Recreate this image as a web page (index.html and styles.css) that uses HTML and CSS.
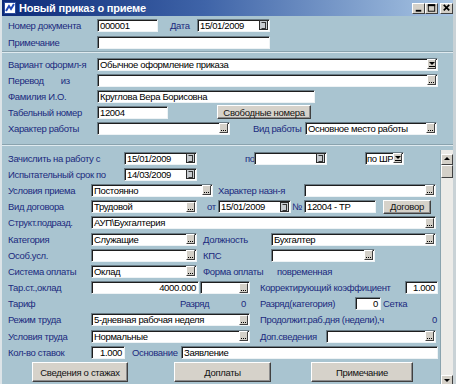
FILE: index.html
```html
<!DOCTYPE html>
<html lang="ru">
<head>
  <meta charset="UTF-8">
  <title>Новый приказ о приеме</title>
  <link rel="stylesheet" href="styles.css">
</head>
<body>
  <div class="window">
    <div class="titlebar">
      <svg class="app-icon" width="12" height="12" viewBox="0 0 12 12">
        <rect x="0.5" y="0.5" width="11" height="11" fill="#fff" stroke="#2a4c9c"/>
        <path d="M2 9 L5 4 L7 7 L10 2" stroke="#1f48b8" stroke-width="2" fill="none"/>
      </svg>
      <span class="title">Новый приказ о приеме</span>
      <div class="caption-btns">
        <span class="cbtn">
          <svg width="12" height="10" viewBox="0 0 12 10"><rect x="3" y="7" width="6" height="2" fill="#000"/></svg>
        </span>
        <span class="cbtn">
          <svg width="12" height="10" viewBox="0 0 12 10"><rect x="2.5" y="1.5" width="7" height="7" fill="none" stroke="#000"/><rect x="2" y="1" width="8" height="2" fill="#000"/></svg>
        </span>
        <span class="cbtn cbtn-close">
          <svg width="12" height="10" viewBox="0 0 12 10"><path d="M3 1.5 L9 7.5 M9 1.5 L3 7.5" stroke="#000" stroke-width="1.8"/></svg>
        </span>
      </div>
    </div>

    <div class="form">
      <div class="sec sec-top">
        <div class="row">
          <span class="lbl lbl-main">Номер документа</span>
          <div class="field w61"><span class="val">000001</span></div>
          <span class="lbl lbl-date">Дата</span>
          <div class="field w73"><span class="val">15/01/2009</span><i class="cal"></i></div>
        </div>
        <div class="row">
          <span class="lbl lbl-main">Примечание</span>
          <div class="field w173"></div>
        </div>
      </div>

      <div class="sep sep-1"></div>

      <div class="sec sec-mid">
        <div class="row">
          <span class="lbl lbl-main">Вариант оформл-я</span>
          <div class="field w341"><span class="val">Обычное оформление приказа</span><i class="drop"></i></div>
        </div>
        <div class="row">
          <span class="lbl lbl-main lbl-split"><span>Перевод</span><span class="iz">из</span></span>
          <div class="field w341"><span class="val"></span><i class="dots"></i></div>
        </div>
        <div class="row">
          <span class="lbl lbl-main">Фамилия И.О.</span>
          <div class="field w218"><span class="val">Круглова Вера Борисовна</span></div>
        </div>
        <div class="row">
          <span class="lbl lbl-main">Табельный номер</span>
          <div class="field w71"><span class="val">12004</span></div>
          <button class="btn btn-free">Свободные номера</button>
        </div>
        <div class="row">
          <span class="lbl lbl-main">Характер работы</span>
          <div class="field w133"><span class="val"></span><i class="dots"></i></div>
          <span class="lbl lbl-kind">Вид работы</span>
          <div class="field w132"><span class="val">Основное место работы</span><i class="dots"></i></div>
        </div>
      </div>

      <div class="sep sep-2"></div>

      <div class="sec-scroll">
        <div class="scroll-content">
          <div class="row row-s">
            <span class="lbl lbl-long">Зачислить на работу с</span>
            <div class="field w73"><span class="val">15/01/2009</span><i class="cal"></i></div>
            <span class="lbl lbl-po">по</span>
            <div class="field w73"><span class="val"></span><i class="cal"></i></div>
            <div class="field w39 gap-shr"><span class="val">по ШР</span><i class="drop"></i></div>
          </div>
          <div class="row row-s">
            <span class="lbl lbl-long">Испытательный срок по</span>
            <div class="field w73"><span class="val">14/03/2009</span><i class="cal"></i></div>
          </div>
          <div class="row row-s">
            <span class="lbl lbl-short">Условия приема</span>
            <div class="field w122"><span class="val">Постоянно</span><i class="dots"></i></div>
            <span class="lbl lbl-assign">Характер назн-я</span>
            <div class="field w132"><span class="val"></span><i class="dots"></i></div>
          </div>
          <div class="row row-s">
            <span class="lbl lbl-short">Вид договора</span>
            <div class="field w106"><span class="val">Трудовой</span><i class="dots"></i></div>
            <span class="lbl lbl-ot">от</span>
            <div class="field w73"><span class="val">15/01/2009</span><i class="cal"></i></div>
            <span class="lbl lbl-no">№</span>
            <div class="field w72"><span class="val">12004 - ТР</span></div>
            <button class="btn btn-contract">Договор</button>
          </div>
          <div class="row row-s">
            <span class="lbl lbl-short">Структ.подразд.</span>
            <div class="field w345"><span class="val">АУП\Бухгалтерия</span><i class="dots"></i></div>
          </div>
          <div class="row row-s">
            <span class="lbl lbl-short">Категория</span>
            <div class="field w106"><span class="val">Служащие</span><i class="dots"></i></div>
            <span class="lbl lbl-right">Должность</span>
            <div class="field w165"><span class="val">Бухгалтер</span><i class="dots"></i></div>
          </div>
          <div class="row row-s">
            <span class="lbl lbl-short">Особ.усл.</span>
            <div class="field w106"><span class="val"></span><i class="dots"></i></div>
            <span class="lbl lbl-right">КПС</span>
            <div class="field w104"><span class="val"></span><i class="dots"></i></div>
          </div>
          <div class="row row-s">
            <span class="lbl lbl-short">Система оплаты</span>
            <div class="field w106"><span class="val">Оклад</span><i class="dots"></i></div>
            <span class="lbl lbl-right lbl-form">Форма оплаты</span>
            <span class="lbl">повременная</span>
          </div>
          <div class="row row-s">
            <span class="lbl lbl-short">Тар.ст.,оклад</span>
            <div class="field w108 num"><span class="val">4000.000</span></div>
            <div class="field w50 gap-1"><span class="val"></span><i class="dots"></i></div>
            <span class="lbl lbl-coef">Корректирующий коэффициент</span>
            <div class="field w33 num"><span class="val">1.000</span></div>
          </div>
          <div class="row row-s">
            <span class="lbl lbl-tarif">Тариф</span>
            <span class="lbl lbl-grade">Разряд</span>
            <span class="lbl lbl-zero">0</span>
            <span class="lbl lbl-cat">Разряд(категория)</span>
            <div class="field w26 num"><span class="val">0</span></div>
            <span class="lbl lbl-grid">Сетка</span>
          </div>
          <div class="row row-s">
            <span class="lbl lbl-short">Режим труда</span>
            <div class="field w159"><span class="val">5-дневная рабочая неделя</span><i class="dots"></i></div>
            <span class="lbl lbl-dur">Продолжит.раб.дня (недели),ч</span>
            <span class="lbl">0</span>
          </div>
          <div class="row row-s">
            <span class="lbl lbl-short">Условия труда</span>
            <div class="field w159"><span class="val">Нормальные</span><i class="dots"></i></div>
            <span class="lbl lbl-extra">Доп.сведения</span>
            <div class="field w110"><span class="val"></span><i class="dots"></i></div>
          </div>
          <div class="row row-s">
            <span class="lbl lbl-short">Кол-во ставок</span>
            <div class="field w34 num"><span class="val">1.000</span></div>
            <span class="lbl lbl-basis">Основание</span>
            <div class="field w257"><span class="val">Заявление</span></div>
          </div>

          <div class="actions">
            <button class="btn btn-big btn-exp">Сведения о стажах</button>
            <button class="btn btn-big btn-extra">Доплаты</button>
            <button class="btn btn-big btn-note">Примечание</button>
          </div>
        </div>

        <div class="scrollbar">
          <span class="sb-btn sb-up"></span>
          <span class="sb-thumb"></span>
          <span class="sb-track"></span>
          <span class="sb-btn sb-down"></span>
        </div>
      </div>
    </div>
  </div>
</body>
</html>
```

FILE: styles.css
```css
* {
  margin: 0;
  padding: 0;
  box-sizing: border-box;
}

body {
  font-family: 'Liberation Sans', Arial, sans-serif;
  font-size: 9.5px;
  letter-spacing: -0.35px;
  background: #a9c4d0;
}

.window {
  width: 456px;
  height: 384px;
  overflow: hidden;
  background: #a9c4d0;
  border-left: 2px solid #dde4e8;
  border-right: 3px solid #c9d2d6;
}

/* title bar */
.titlebar {
  display: flex;
  align-items: center;
  height: 16px;
  padding-left: 2px;
  background: linear-gradient(to right, #0c2a78 0%, #3f64a8 45%, #a9c6e4 100%);
}

.app-icon {
  margin-right: 3px;
}

.title {
  color: #fff;
  font-weight: bold;
  font-size: 11px;
  letter-spacing: -0.2px;
}

.caption-btns {
  display: flex;
  margin-left: auto;
  margin-right: 0;
}

.cbtn {
  display: flex;
  align-items: center;
  justify-content: center;
  width: 13px;
  height: 11px;
  background: #d4d0c8;
  border: 1px solid;
  border-color: #fff #404040 #404040 #fff;
}

.cbtn-close {
  margin-left: 2px;
}

/* form */
.form {
  padding-top: 1px;
}

.sec {
  padding-left: 6px;
}

.row {
  display: flex;
  align-items: center;
  height: 16px;
  white-space: nowrap;
}

.sec-top .row + .row {
  margin-top: 1px;
}

.row-s {
  height: 16.2px;
}

.lbl {
  color: #1b2a7e;
  white-space: nowrap;
}

.lbl-main { width: 89px; }
.lbl-date { width: 27px; margin-left: 12px; }
.lbl-split { display: flex; }
.lbl-split .iz { margin-left: 17px; }
.lbl-kind { width: 52px; margin-left: 23px; }
.lbl-long { width: 116px; }
.lbl-po { width: 9px; margin-left: 48px; }
.lbl-short { width: 83px; }
.lbl-assign { width: 86px; margin-left: 5px; }
.lbl-ot { width: 11px; margin-left: 10px; }
.lbl-no { width: 13px; padding-left: 1px; }
.lbl-right { width: 68px; margin-left: 6px; }
.lbl-form { width: 74px; }
.lbl-coef { width: 145px; margin-left: 10px; }
.lbl-tarif { width: 172px; }
.lbl-grade { width: 61px; }
.lbl-zero { width: 9px; }
.lbl-cat { width: 95px; margin-left: 10px; }
.lbl-grid { margin-left: 2px; }
.lbl-dur { width: 172px; margin-left: 10px; }
.lbl-extra { width: 66px; margin-left: 10px; }
.lbl-basis { width: 49px; margin-left: 7px; }

/* input boxes */
.field {
  display: flex;
  align-items: center;
  height: 13px;
  background: #fff;
  border-top: 1px solid #6a7c86;
  border-left: 1px solid #6a7c86;
  border-right: 1px solid #eef3f5;
  border-bottom: 1px solid #eef3f5;
  box-shadow: inset 1px 1px 0 #1e1e1e;
  color: #000;
}

.val {
  flex: 1;
  padding-left: 2px;
  overflow: hidden;
  white-space: nowrap;
  line-height: 11px;
}

.num .val {
  text-align: right;
  padding-right: 2px;
}

.w26 { width: 26px; }
.w33 { width: 33px; }
.w34 { width: 34px; }
.w39 { width: 39px; }
.w50 { width: 50px; }
.w61 { width: 61px; }
.w71 { width: 71px; }
.w72 { width: 72px; }
.w73 { width: 73px; }
.w104 { width: 104px; }
.w106 { width: 106px; }
.w108 { width: 108px; }
.w110 { width: 110px; }
.w122 { width: 122px; }
.w132 { width: 132px; }
.w133 { width: 133px; }
.w159 { width: 159px; }
.w165 { width: 165px; }
.w173 { width: 173px; }
.w218 { width: 218px; }
.w257 { width: 257px; }
.w341 { width: 341px; }
.w345 { width: 345px; }

.gap-1 { margin-left: 1px; }
.gap-shr { margin-left: 38px; }

.gap-shr .val {
  padding-left: 1px;
}

/* small buttons inside fields */
.dots,
.drop,
.cal {
  position: relative;
  flex: none;
  width: 9px;
  height: 10px;
  margin-right: 1px;
  background: #d4d0c8;
  border: 1px solid;
  border-color: #fff #404040 #404040 #fff;
}

.dots::after {
  content: "";
  position: absolute;
  left: 1px;
  bottom: 1px;
  width: 1px;
  height: 1px;
  background: #000;
  box-shadow: 2px 0 #000, 4px 0 #000;
}

.drop::before {
  content: "";
  position: absolute;
  left: 1px;
  top: 2px;
  border-left: 3px solid transparent;
  border-right: 3px solid transparent;
  border-top: 3px solid #000;
}

.drop::after {
  content: "";
  position: absolute;
  left: 1px;
  top: 6px;
  width: 6px;
  height: 1px;
  background: #000;
}

.cal {
  background: #c8ccd0;
  border-color: #2b2b2b;
}

.cal::after {
  content: "";
  position: absolute;
  left: 1px;
  top: 1px;
  width: 3px;
  height: 5px;
  border: 1px solid #333;
  border-left-color: transparent;
  border-top-color: #333;
  border-bottom-color: #333;
}

/* buttons */
.btn {
  font-family: inherit;
  font-size: 9.5px;
  letter-spacing: -0.3px;
  color: #111;
  background: #d6d2ca;
  border: 1px solid;
  border-color: #fff #404040 #404040 #fff;
  box-shadow: inset -1px -1px 0 #8c8c8c;
}

.btn-free {
  width: 94px;
  height: 14px;
  margin-left: 49px;
}

.btn-contract {
  width: 48px;
  height: 14px;
  margin-left: 7px;
}

.sep {
  height: 2px;
  border-top: 1px solid #8aa3ae;
  border-bottom: 1px solid #dfeaef;
}

.sep-1 {
  margin-top: 1px;
  margin-bottom: 3px;
}

.sep-2 {
  margin-top: 8px;
}

/* scrolling part */
.sec-scroll {
  display: flex;
  margin-top: 4px;
}

.scroll-content {
  width: 438px;
  padding-left: 6px;
}

.actions {
  display: flex;
  margin-top: 2px;
}

.btn-big {
  height: 20px;
}

.btn-exp { width: 96px; margin-left: 24px; }
.btn-extra { width: 97px; margin-left: 46px; }
.btn-note { width: 102px; margin-left: 40px; }

.scrollbar {
  display: flex;
  flex-direction: column;
  width: 13px;
  height: 236px;
  background: #ecebe8;
  border-left: 1px solid #8aa3ae;
}

.sb-btn,
.sb-thumb {
  position: relative;
  width: 12px;
  height: 11px;
  background: #d4d0c8;
  border: 1px solid;
  border-color: #fff #404040 #404040 #fff;
}

.sb-up {
  margin-top: 4px;
}

.sb-thumb {
  height: 13px;
}

.sb-track {
  flex: 1;
}

.sb-btn::after {
  content: "";
  position: absolute;
  left: 2px;
  border-left: 3px solid transparent;
  border-right: 3px solid transparent;
}

.sb-up::after {
  top: 2px;
  border-bottom: 3px solid #000;
}

.sb-down::after {
  top: 3px;
  border-top: 3px solid #000;
}
```
